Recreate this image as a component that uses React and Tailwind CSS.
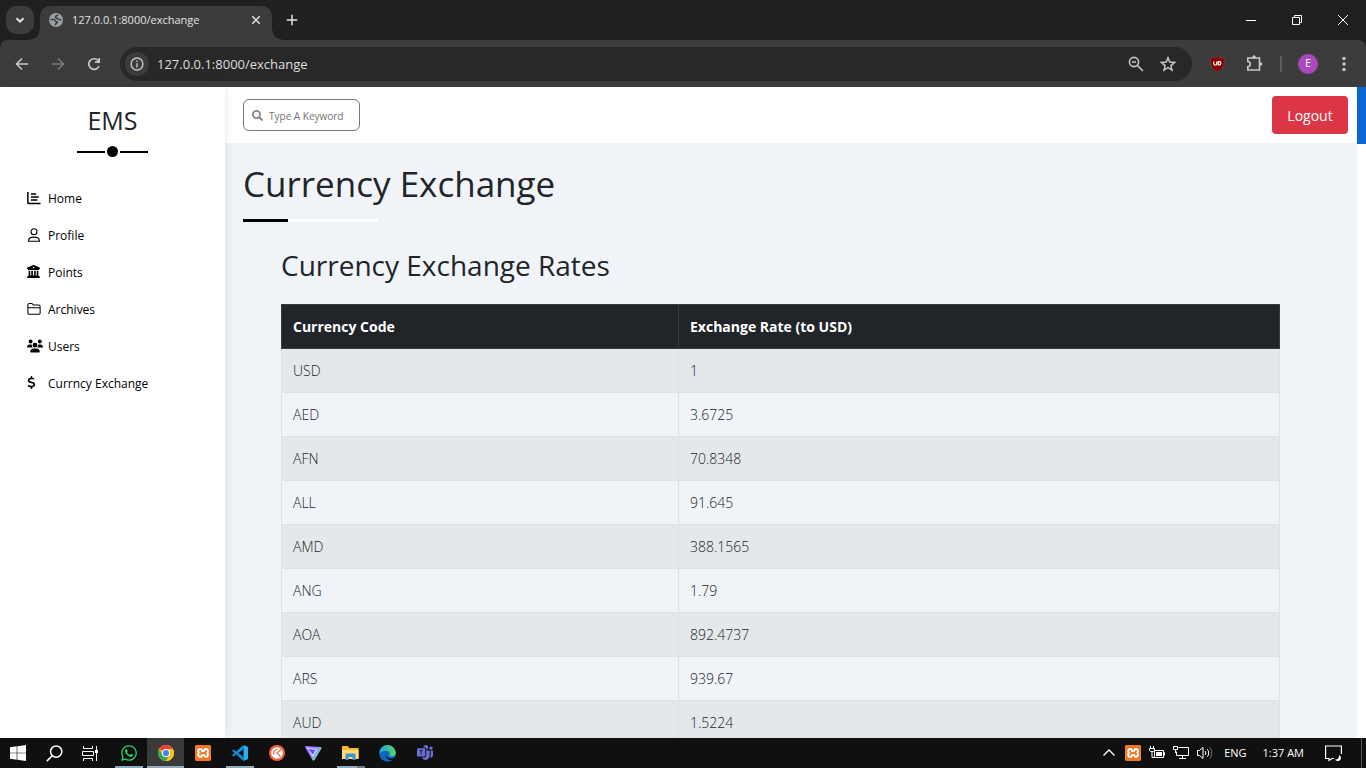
import React from "react";
import { FaWhatsapp, FaSearch } from "react-icons/fa";
import { FaBuildingColumns, FaDollarSign, FaUsers } from "react-icons/fa6";
import { SiXampp } from "react-icons/si";
import { BsMicrosoftTeams } from "react-icons/bs";

const rates = [
  ["USD", "1"],
  ["AED", "3.6725"],
  ["AFN", "70.8348"],
  ["ALL", "91.645"],
  ["AMD", "388.1565"],
  ["ANG", "1.79"],
  ["AOA", "892.4737"],
  ["ARS", "939.67"],
  ["AUD", "1.5224"],
];

function Stroke({ size = 16, width = 1.5, children, className = "" }) {
  return (
    <svg width={size} height={size} viewBox="0 0 16 16" fill="none" stroke="currentColor" strokeWidth={width} className={"shrink-0 " + className} aria-hidden="true">
      {children}
    </svg>
  );
}

function TabStrip() {
  return (
    <div className="flex h-10 items-end bg-[#1f2120] text-[#e3e3e3]">
      <button aria-label="Search tabs" className="mb-1.5 ml-1.5 flex h-7 w-7 items-center justify-center rounded-[10px] bg-[#3c3c3c]">
        <Stroke size={14} width={2.2}><path d="M4 6l4 4 4-4" /></Stroke>
      </button>
      <div className="relative ml-1.5 flex h-[34px] w-[232px] items-center rounded-t-[10px] bg-[#3c3c3c] pb-1.5 pl-[9px] pr-2.5">
        <span className="absolute -left-2.5 bottom-0 h-2.5 w-2.5 bg-[radial-gradient(circle_at_0_0,#1f2120_9px,#3c3c3c_10px)]" />
        <span className="absolute -right-2.5 bottom-0 h-2.5 w-2.5 bg-[radial-gradient(circle_at_100%_0,#1f2120_9px,#3c3c3c_10px)]" />
        <svg width="14" height="14" viewBox="0 0 14 14" aria-hidden="true">
          <circle cx="7" cy="7" r="7" fill="#9aa0a6" />
          <path d="M1.500 6.500h3.300c1.500 0 1 2 2.400 2 1.500 0 1.300 1.200.3 1.700-.8.400-1.200 1-1.200 2M8.800 1.700c-.2 1.300-2.300.9-2.300 2.300 0 1.500 1.500 1 2.300 1.700.8.800 1.500 1.300 3.500.9" fill="none" stroke="#3c3c3c" strokeWidth="1.600" />
        </svg>
        <span className="ml-[9px] flex-1 text-[11px]">127.0.0.1:8000/exchange</span>
        <button aria-label="Close tab" className="flex h-3 w-3 items-center justify-center">
          <Stroke size={12} width={2}><path d="M3 3l10 10M13 3L3 13" /></Stroke>
        </button>
      </div>
      <button aria-label="New tab" className="mb-3.5 ml-[14px]">
        <Stroke size={12} width={2}><path d="M8 1v14M1 8h14" /></Stroke>
      </button>
      <div className="ml-auto flex h-10 items-center text-white">
        <button aria-label="Minimize" className="flex w-[46px] justify-center">
          <svg width="10" height="10" aria-hidden="true"><path d="M0 5.500h10" stroke="currentColor" /></svg>
        </button>
        <button aria-label="Restore" className="flex w-[46px] justify-center">
          <svg width="10" height="10" fill="none" stroke="currentColor" aria-hidden="true"><path d="M.5 2.500h7v7h-7zM2.500 2.500v-2h7v7h-2" /></svg>
        </button>
        <button aria-label="Close" className="flex w-[46px] justify-center">
          <svg width="10" height="10" fill="none" stroke="currentColor" aria-hidden="true"><path d="M0 0l10 10M10 0L0 10" /></svg>
        </button>
      </div>
    </div>
  );
}

function Toolbar() {
  return (
    <div className="bg-[#1f2120]">
      <div className="flex h-[47px] items-center rounded-t-lg bg-[#3c3c3c] text-[#c7c7c7]">
        <button aria-label="Back" className="ml-[14px]"><Stroke width={1.6}><path d="M14 8H3M8 2.500L2.500 8 8 13.500" /></Stroke></button>
        <button aria-label="Forward" className="ml-5 text-[#7b7b7b]"><Stroke width={1.6}><path d="M2 8h11M8 2.500L13.500 8 8 13.500" /></Stroke></button>
        <button aria-label="Reload" className="ml-5"><Stroke width={1.7}><path d="M13 10a5.300 5.300 0 1 1-.6-5M13.200 2v4.200H9" /></Stroke></button>
        <div className="ml-[18px] mr-[17px] flex h-[34px] flex-1 items-center rounded-full bg-[#282828] pl-[5px] pr-4">
          <button aria-label="View site information" className="flex h-6 w-6 items-center justify-center rounded-full bg-[#3c3c3c]">
            <Stroke size={14} width={1.6}><circle cx="8" cy="8" r="6.800" /><path d="M8 7v5M8 4v1.700" /></Stroke>
          </button>
          <input aria-label="Address" readOnly defaultValue="127.0.0.1:8000/exchange" className="ml-2 h-5 min-w-0 flex-1 bg-transparent text-[13px] leading-5 text-[#dedede] outline-none" />
          <button aria-label="Zoom"><Stroke width={1.600}><circle cx="6" cy="6" r="4.600" /><path d="M9.500 9.500L15 15M4 6h4" /></Stroke></button>
          <button aria-label="Bookmark this tab" className="ml-4">
            <Stroke width={1.500}><path d="M8 1.800l1.800 4.300 4.700.4-3.600 3.100 1.100 4.600L8 11.700l-4 2.500 1.100-4.600L1.500 6.500l4.700-.4z" /></Stroke>
          </button>
        </div>
        <button aria-label="uBlock" className="ml-px mr-[21px] h-4 w-[15px]">
          <svg width="15" height="16" viewBox="0 0 15 16" aria-hidden="true">
            <path d="M7.500.3C5.800 1.700 3.500 2 .8 2 .5 8 1 12.500 7.500 15.700 14 12.500 14.500 8 14.200 2 11.500 2 9.200 1.700 7.500.3z" fill="#800000" stroke="#9d3a3a" strokeWidth=".6" />
            <path d="M3.800 5.500v2.200a1.500 1.500 0 0 0 3 0V5.500M8.300 5.700v3.200h1a1.600 1.600 0 0 0 0-3.200z" fill="none" stroke="#fff" strokeWidth="1.200" />
          </svg>
        </button>
        <button aria-label="Extensions" className="mr-[17px]">
          <svg width="17" height="17" viewBox="0 0 17 17" fill="none" stroke="currentColor" strokeWidth="1.600" aria-hidden="true">
            <path d="M1.800 3h11.700v12H1.800v-3.300c1.600 0 2.500-1.100 2.500-2.600S3.400 6.600 1.800 6.500z" />
            <circle cx="8" cy="2" r="1.700" fill="currentColor" stroke="none" /><circle cx="14.700" cy="9" r="1.700" fill="currentColor" stroke="none" />
          </svg>
        </button>
        <span className="h-4 w-0.5 bg-[#5c5c5c]" />
        <button aria-label="Profile" className="ml-4 flex h-5 w-5 items-center justify-center rounded-full bg-[#ab47bc] text-[11px] text-white">E</button>
        <button aria-label="Menu" className="ml-[18px] mr-[14px]">
          <Stroke><g fill="currentColor" stroke="none"><circle cx="8" cy="2.500" r="1.700" /><circle cx="8" cy="8" r="1.700" /><circle cx="8" cy="13.500" r="1.700" /></g></Stroke>
        </button>
      </div>
    </div>
  );
}

const nav = [
  ["Home", <Stroke size={14} width={1.700} key="i"><path d="M1 1v12.300a1 1 0 0 0 1 1h13.500M4.500 3.300h6M4.500 6.800h9M4.500 10.300h7.500" /></Stroke>],
  ["Profile", <Stroke size={14} width={1.300} key="i"><circle cx="8" cy="4.300" r="3.400" /><path d="M1.800 15.200v-.7c0-2.700 2.500-4 6.200-4s6.200 1.300 6.200 4v.7z" /></Stroke>],
  ["Points", <FaBuildingColumns size={13} key="i" />],
  ["Archives", <Stroke size={14} width={1.200} key="i"><path d="M1 12.500v-9c0-1 .6-1.700 1.600-1.700h3l2 1.700h5.800c1 0 1.600.7 1.600 1.600v7.400c0 1-.6 1.600-1.600 1.600H2.600c-1 0-1.600-.6-1.600-1.600zM1 6.500h14" /></Stroke>],
  ["Users", <FaUsers size={16} key="i" />],
  ["Currncy Exchange", <span key="i" className="flex w-2 justify-center"><FaDollarSign size={13} className="shrink-0" /></span>],
];

function Sidebar() {
  return (
    <aside className="z-10 w-[225px] shrink-0 bg-white pt-[15px] shadow-[0_0_10px_rgba(0,0,0,0.09)]">
      <h2 className="text-center text-[25px] leading-9 font-medium text-[#212529]">EMS</h2>
      <div className="mt-2 flex h-[11px] items-center justify-center gap-0.5">
        <span className="h-0.5 w-7 bg-black" />
        <span className="h-[11px] w-[11px] rounded-full bg-black" />
        <span className="h-0.5 w-7 bg-black" />
      </div>
      <nav className="mt-[23px] pl-[27px] text-black">
        {nav.map(([label, icon]) => (
          <a key={label} href="#" className="flex h-[37px] items-center gap-[5px] text-[12px]">
            <span className="flex w-4 shrink-0 pb-0.5">{icon}</span>
            {label}
          </a>
        ))}
      </nav>
    </aside>
  );
}

function Page() {
  return (
    <div className="flex min-w-0 flex-1 flex-col overflow-hidden bg-[#f0f4f9]">
      <header className="flex h-14 shrink-0 items-center justify-between bg-white pl-[18px] pr-[9px]">
        <label className="flex h-8 w-[117px] items-center rounded-[6px] border border-[#777] pl-2 text-[#808080]">
          <FaSearch size={11} className="shrink-0" />
          <input type="search" aria-label="Keyword" placeholder="Type A Keyword" className="ml-1.5 w-full min-w-0 bg-transparent pt-0.5 text-[10px] outline-none placeholder:text-[#757575]" />
        </label>
        <button className="h-[38px] w-[76px] rounded bg-[#dc3545] text-[14px] text-white">Logout</button>
      </header>
      <main className="px-[18px] pt-4 text-[#212529]">
        <h1 className="text-[35px] leading-[50px] font-medium">Currency Exchange</h1>
        <div className="mt-2.5 flex h-[3px] w-[135px] bg-white"><span className="w-1/3 bg-black" /></div>
        <section className="pt-[25px] pr-[59px] pl-[38px]">
          <h2 className="text-[28px] leading-9 font-medium">Currency Exchange Rates</h2>
          <table className="mt-[21px] w-full table-fixed border-collapse text-left text-[14px]">
            <thead className="bg-[#212529] text-white">
              <tr className="h-11">
                <th className="w-[397px] border border-[#373b3e] px-[11px] font-bold">Currency Code</th>
                <th className="border border-[#373b3e] px-[11px] font-bold">Exchange Rate (to USD)</th>
              </tr>
            </thead>
            <tbody className="font-light">
              {rates.map(([code, rate]) => (
                <tr key={code} className="h-11 odd:bg-[#e4e8eb]">
                  <td className="border border-[#dee2e6] px-[11px]">{code}</td>
                  <td className="border border-[#dee2e6] px-[11px]">{rate}</td>
                </tr>
              ))}
            </tbody>
          </table>
        </section>
      </main>
    </div>
  );
}

function ChromeLogo() {
  return (
    <svg width="16" height="16" viewBox="0 0 16 16" aria-hidden="true">
      <circle cx="8" cy="8" r="8" fill="#fbc116" />
      <path d="M8 8L1.070 4A8 8 0 0 1 14.930 4H8z" fill="#ea4335" />
      <path d="M1.070 4A8 8 0 0 0 8 16l3.460-6L8 8 4.540 10z" fill="#34a853" />
      <path d="M8 4h6.930A8 8 0 0 1 8 16l3.460-6z" fill="#fbc116" />
      <circle cx="8" cy="8" r="4" fill="#fff" /><circle cx="8" cy="8" r="3.100" fill="#4285f4" />
    </svg>
  );
}

function Xampp() {
  return (
    <span className="flex h-4 w-4 items-center justify-center rounded-[3px] bg-white text-[#f37623]">
      <SiXampp size={16} />
    </span>
  );
}

const apps = [
  ["WhatsApp", <FaWhatsapp size={18} color="#2bd46a" key="i" />, "line"],
  ["Chrome", <ChromeLogo key="i" />, "active"],
  ["XAMPP", <Xampp key="i" />, ""],
  ["Visual Studio Code", (
    <svg key="i" width="16" height="16" viewBox="0 0 16 16" aria-hidden="true">
      <path d="M11.500 0L16 2v12l-4.500 2z" fill="#29b0f3" />
      <path d="M1.300 4.400L0 5.700 11.500 16V11.700z" fill="#1387cf" />
      <path d="M1.300 11.600L0 10.300 11.500 0v4.300z" fill="#168fd6" />
    </svg>
  ), "line"],
  ["Git client", (
    <svg key="i" width="16" height="16" viewBox="0 0 16 16" aria-hidden="true">
      <circle cx="8" cy="8" r="8" fill="#f4623a" /><circle cx="8" cy="8" r="5.800" fill="#fff" />
      <path d="M4.700 9.500a4 4 0 0 1 4-5M12 4.500L8 8l3.500 3.500" fill="none" stroke="#f4623a" strokeWidth="1.200" />
    </svg>
  ), ""],
  ["Proton VPN", (
    <svg key="i" width="17" height="16" viewBox="0 0 17 16" aria-hidden="true">
      <defs><linearGradient id="vpn" x1="0" y1="0" x2="1" y2=".6"><stop offset="0" stopColor="#8d76ff" /><stop offset=".5" stopColor="#8f7cff" /><stop offset="1" stopColor="#7af0c0" /></linearGradient></defs>
      <path d="M1.500 1L15.500 2c1 .1 1.300 1 .8 1.800L9.500 15c-.5.8-1.500.8-2 0L.3 2.800C-.2 1.900.5 1 1.500 1z" fill="url(#vpn)" />
      <path d="M1.500 2.500l9.500 1.200c1 .1 1.300.8.800 1.600L8.200 12z" fill="#d9d4ff" />
      <path d="M3 4l7.500.800L8 9.500z" fill="#6d4aff" />
    </svg>
  ), ""],
  ["File Explorer", (
    <svg key="i" width="17" height="16" viewBox="0 0 17 16" aria-hidden="true">
      <path d="M0 1h6l1 2h9.500v11H0z" fill="#f7b928" /><path d="M0 5h16.500v9H0z" fill="#ffdc74" />
      <path d="M3.500 15V8.500h10V15h-3v-3h-4v3z" fill="#3c93d6" />
    </svg>
  ), "split"],
  ["Edge", (
    <svg key="i" width="17" height="17" viewBox="0 0 17 17" aria-hidden="true">
      <defs>
        <linearGradient id="edgeTop" x1="0" x2="1"><stop offset="0" stopColor="#1ea4e6" /><stop offset="1" stopColor="#5bd45f" /></linearGradient>
      </defs>
      <circle cx="8.500" cy="8.500" r="8.300" fill="#0f68be" />
      <path d="M.2 8.500a8.300 8.300 0 0 1 16.600-.5c.1 2-1.500 3.300-3.600 3.300-2 0-3.200-.5-3-1.200 1-1.500.2-4.300-2.700-4.300C4.500 5.800 1.500 7 .2 8.500z" fill="url(#edgeTop)" />
      <path d="M7.500 7.500c-1.700 2.500.5 6 4 6 1.500 0 3-.5 4-1.300-.6 1.600-1 2-2 2.800-4 .6-8.500-2-6-7.500z" fill="#111" />
    </svg>
  ), ""],
  ["Teams", <BsMicrosoftTeams size={16} color="#6a70d6" key="i" />, ""],
];

function Taskbar() {
  return (
    <footer className="flex h-[30px] shrink-0 items-stretch bg-[#101010] text-[11px] text-white">
      <button aria-label="Start" className="flex w-9 items-center justify-center">
        <svg width="16" height="16" viewBox="0 0 16 16" fill="currentColor" aria-hidden="true"><path d="M0 2.200L6.700 1.300v6.400H0zM7.300 1.200L16 0v7.700H7.300zM0 8.300h6.700v6.400L0 13.800zM7.300 8.300H16V16l-8.700-1.200z" /></svg>
      </button>
      <button aria-label="Search" className="flex w-9 items-center justify-center"><Stroke size={17} width={1.400}><circle cx="9.600" cy="6.200" r="5.300" /><path d="M6 10L.8 15.200" /></Stroke></button>
      <button aria-label="Task view" className="mr-0.5 flex w-9 items-center justify-center">
        <svg width="17" height="15" fill="none" stroke="currentColor" aria-hidden="true"><path d="M1.500 0v2.500h9V0M1.500 15v-2.500h9V15M.5 5.500h11v4H.5zM14.500 0v15" /><path d="M13 4h3v3h-3z" fill="currentColor" stroke="none" /></svg>
      </button>
      {apps.map(([name, icon, state]) => (
        <button key={name} aria-label={name} className={"flex w-[37px] flex-col items-center " + (state === "active" ? "bg-[#3a3a3a]" : "")}>
          <span className="flex flex-1 items-center pt-0.5">{icon}</span>
          <span className={"h-0.5 " + (state === "active" ? "w-full bg-[#94a9ba]" : state === "line" ? "w-7 bg-[#94a9ba]" : state === "split" ? "w-7 bg-linear-to-r from-[#94a9ba] from-70% to-[#6b7a87] to-70%" : "w-7")} />
        </button>
      ))}
      <div className="ml-auto flex items-center">
        <button aria-label="Show hidden icons" className="mr-2.5"><svg width="12" height="8" fill="none" stroke="currentColor" strokeWidth="1.300" aria-hidden="true"><path d="M.5 6.500L6 1l5.500 5.500" /></svg></button>
        <Xampp />
        <svg className="ml-2" width="16" height="14" fill="none" stroke="currentColor" aria-hidden="true"><path d="M5.500 4.500h9v7h-9zM14.500 6.500h1v3M1.500 0v2M4.500 0v2M.5 2.500h5v2l-1 1h-3l-1-1zM3 6v5.500h3" /><path d="M7 6h6v4H7z" fill="currentColor" stroke="none" /></svg>
        <svg className="ml-2" width="17" height="14" fill="none" stroke="currentColor" aria-hidden="true"><path d="M5.500 1.500h10v8h-12v-4M9.500 9.500v3M6 12.500h7M.5.500h4v3h-4zM2.500 4v3" /></svg>
        <svg className="ml-[7px]" width="17" height="14" fill="none" stroke="currentColor" aria-hidden="true"><path d="M.5 4.500h2l3.500-3v11l-3.500-3h-2zM8 5c1 1 1 3 0 4M10.200 3.200c2 2 2 5.600 0 7.600" /><path d="M12.500 1.200c3 3.200 3 8.400 0 11.600" stroke="#777" /></svg>
        <span className="ml-2.5">ENG</span>
        <time className="ml-4">1:37 AM</time>
        <button aria-label="Notifications" className="ml-[21px] mr-[19px]"><svg width="17" height="17" fill="none" stroke="currentColor" strokeWidth="1.200" aria-hidden="true"><path d="M9 13.500H7l-3 2v-2H.6V1h15.800v8" /><path d="M10 14.500c3 .3 4.200-1.500 4-4.500 3 1.500 2.500 6-1 6-1.500 0-2.500-.7-3-1.500z" fill="currentColor" stroke="none" /></svg></button>
        <span className="h-full w-[5px] border-l border-[#555]" />
      </div>
    </footer>
  );
}

export default function App() {
  return (
    <div className="flex h-screen flex-col overflow-hidden font-['Open_Sans','Noto_Sans',sans-serif]">
      <TabStrip />
      <Toolbar />
      <div className="flex min-h-0 flex-1">
        <Sidebar />
        <Page />
        <div className="w-[9px] shrink-0 bg-white"><div className="h-[57px] bg-[#0b66d6]" /></div>
      </div>
      <Taskbar />
    </div>
  );
}
